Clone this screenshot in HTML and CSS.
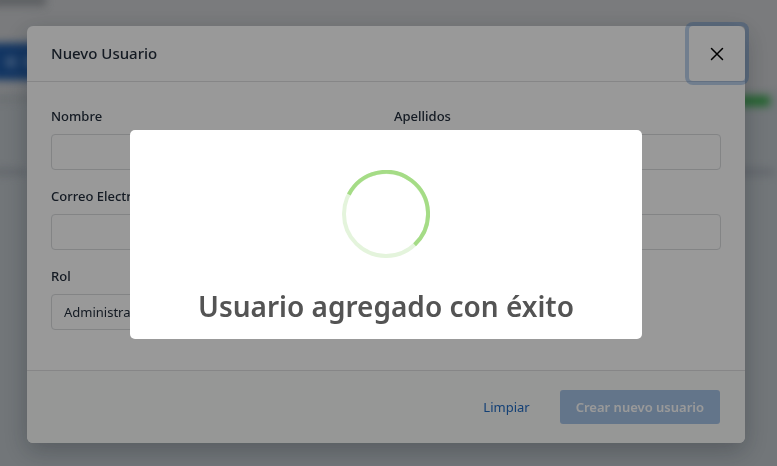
FILE: index.html
```html
<!DOCTYPE html>
<html lang="es">
<head>
<meta charset="utf-8">
<meta name="viewport" content="width=device-width, initial-scale=1">
<title>Nuevo Usuario</title>
<link rel="stylesheet" href="styles.css">
</head>
<body>
<div class="page" aria-hidden="true">
  <span class="blot blot-title"></span>
  <span class="blot blot-button"><i class="blot-plus"></i><i class="blot-letter"></i></span>
  <span class="blot blot-card"></span>
  <span class="blot blot-progress"></span>
  <span class="blot blot-cell-left"></span>
  <span class="blot blot-cell-right"></span>
</div>
<div class="layer">
  <form class="modal">
    <header class="modal-header">
      <h1 class="modal-title">Nuevo Usuario</h1>
      <button class="close" type="button" aria-label="Cerrar">
        <svg width="14" height="14" viewBox="0 0 14 14" fill="none" stroke="currentColor" stroke-width="1.5" stroke-linecap="round"><path d="M1.5 1.5l11 11M12.5 1.5l-11 11"/></svg>
      </button>
    </header>
    <div class="modal-body">
      <div class="field"><label for="nombre">Nombre</label><input id="nombre" type="text"></div>
      <div class="field"><label for="apellidos">Apellidos</label><input id="apellidos" type="text"></div>
      <div class="field"><label for="correo">Correo Electrónico</label><input id="correo" type="email"></div>
      <div class="field"><label for="clave">Contraseña</label><input id="clave" type="password"></div>
      <div class="field"><label for="rol">Rol</label><select id="rol"><option>Administrador</option></select></div>
    </div>
    <footer class="modal-footer">
      <button class="btn btn-link" type="reset">Limpiar</button>
      <button class="btn btn-primary" type="submit" disabled>Crear nuevo usuario</button>
    </footer>
  </form>
</div>
<div class="layer layer-alert">
  <div class="alert" role="alertdialog" aria-labelledby="alert-title">
    <svg class="ring" width="88" height="88" viewBox="0 0 88 88" fill="none" stroke-width="4">
      <circle cx="44" cy="44" r="42" stroke="#e4f4dc"/>
      <path d="M6.8 24.5A42 42 0 1 1 72.6 74.7" stroke="#a5dc86"/>
    </svg>
    <h2 class="alert-title" id="alert-title">Usuario agregado con éxito</h2>
  </div>
</div>
</body>
</html>
```
FILE: styles.css
```css
* {
  box-sizing: border-box;
}

body {
  margin: 0;
  min-height: 100vh;
  overflow: hidden;
  background: #bec5ca;
  color: #232e3c;
  font: 13px/20px "Noto Sans", "Open Sans", sans-serif;
}

/* Blurred page behind the modal */
.page {
  position: fixed;
  inset: 0;
  background: linear-gradient(#cbcdd0 84px, #bec5ca 100px);
}

.blot {
  position: absolute;
  filter: blur(4px);
}

.blot-title {
  left: -8px;
  top: -6px;
  width: 54px;
  height: 12px;
  background: #9a9ea3;
}

.blot-button {
  left: -16px;
  top: 43px;
  width: 100px;
  height: 37px;
  background: #1d58a4;
}

.blot-plus,
.blot-letter {
  position: absolute;
  top: 14px;
  left: 22px;
  width: 10px;
  height: 10px;
  background: #6c98cf;
  filter: blur(1px);
}

.blot-letter {
  left: 41px;
}

.blot-card {
  left: -16px;
  top: 97px;
  width: 80px;
  height: 4px;
  background: #b0b4b9;
}

.blot-progress {
  right: 7px;
  top: 96px;
  width: 60px;
  height: 10px;
  background: #35a548;
}

.blot-cell-left {
  left: -8px;
  top: 169px;
  width: 34px;
  height: 6px;
  background: #a3a9b2;
}

.blot-cell-right {
  right: 3px;
  top: 169px;
  width: 40px;
  height: 6px;
  background: #a3a9b2;
}

.layer {
  position: fixed;
  inset: 0;
  padding: 26px 32px 23px 27px;
}

.layer-alert {
  display: flex;
  align-items: center;
  justify-content: center;
  background: rgba(0, 0, 0, 0.4);
}

/* Form modal */
.modal {
  max-width: 720px;
  margin: 0 auto;
  border-radius: 6px;
  background: #fff;
  box-shadow: 0 8px 24px rgba(35, 46, 60, 0.3);
}

.modal-header {
  display: flex;
  align-items: stretch;
  justify-content: space-between;
  height: 56px;
  padding-left: 24px;
  border-bottom: 1px solid #dfdfe1;
}

.modal-title {
  margin: 0;
  padding: 17px 0;
  font-size: 15px;
  font-weight: 500;
  line-height: 20px;
}

.close {
  display: grid;
  place-items: center;
  width: 56px;
  padding: 0;
  border: 0;
  border-radius: 4px;
  background: none;
  color: #000;
  box-shadow: 0 0 0 4px rgba(32, 107, 196, 0.3);
}

.modal-body {
  display: grid;
  grid-template-columns: 1fr 1fr;
  gap: 16px;
  padding: 24px 24px 40px;
}

.field {
  display: flex;
  flex-direction: column;
  gap: 8px;
}

.field label {
  font-weight: 500;
}

.field input,
.field select {
  width: 100%;
  height: 36px;
  padding: 0 12px;
  border: 1px solid #dadcde;
  border-radius: 4px;
  background: #fff;
  color: inherit;
  font: inherit;
  appearance: none;
}

.modal-footer {
  display: flex;
  justify-content: flex-end;
  gap: 14px;
  padding: 19px 25px;
  border-top: 1px solid #dfdfe1;
  border-radius: 0 0 6px 6px;
  background: #fbfcfb;
}

.btn {
  height: 34px;
  padding: 0 16px;
  border: 0;
  border-radius: 3px;
  font: inherit;
}

.btn-link {
  background: none;
  color: #206bc4;
}

.btn-primary {
  background: #a6c4e7;
  color: #fff;
  font-weight: 600;
}

/* Success alert */
.alert {
  display: flex;
  flex-direction: column;
  align-items: center;
  gap: 28px;
  width: 512px;
  max-width: 100%;
  padding: 40px 20px 13px;
  border-radius: 5px;
  background: #fff;
}

.alert-title {
  margin: 0;
  color: #545454;
  font-size: 28px;
  font-weight: 600;
  line-height: 40px;
  text-align: center;
}
```
